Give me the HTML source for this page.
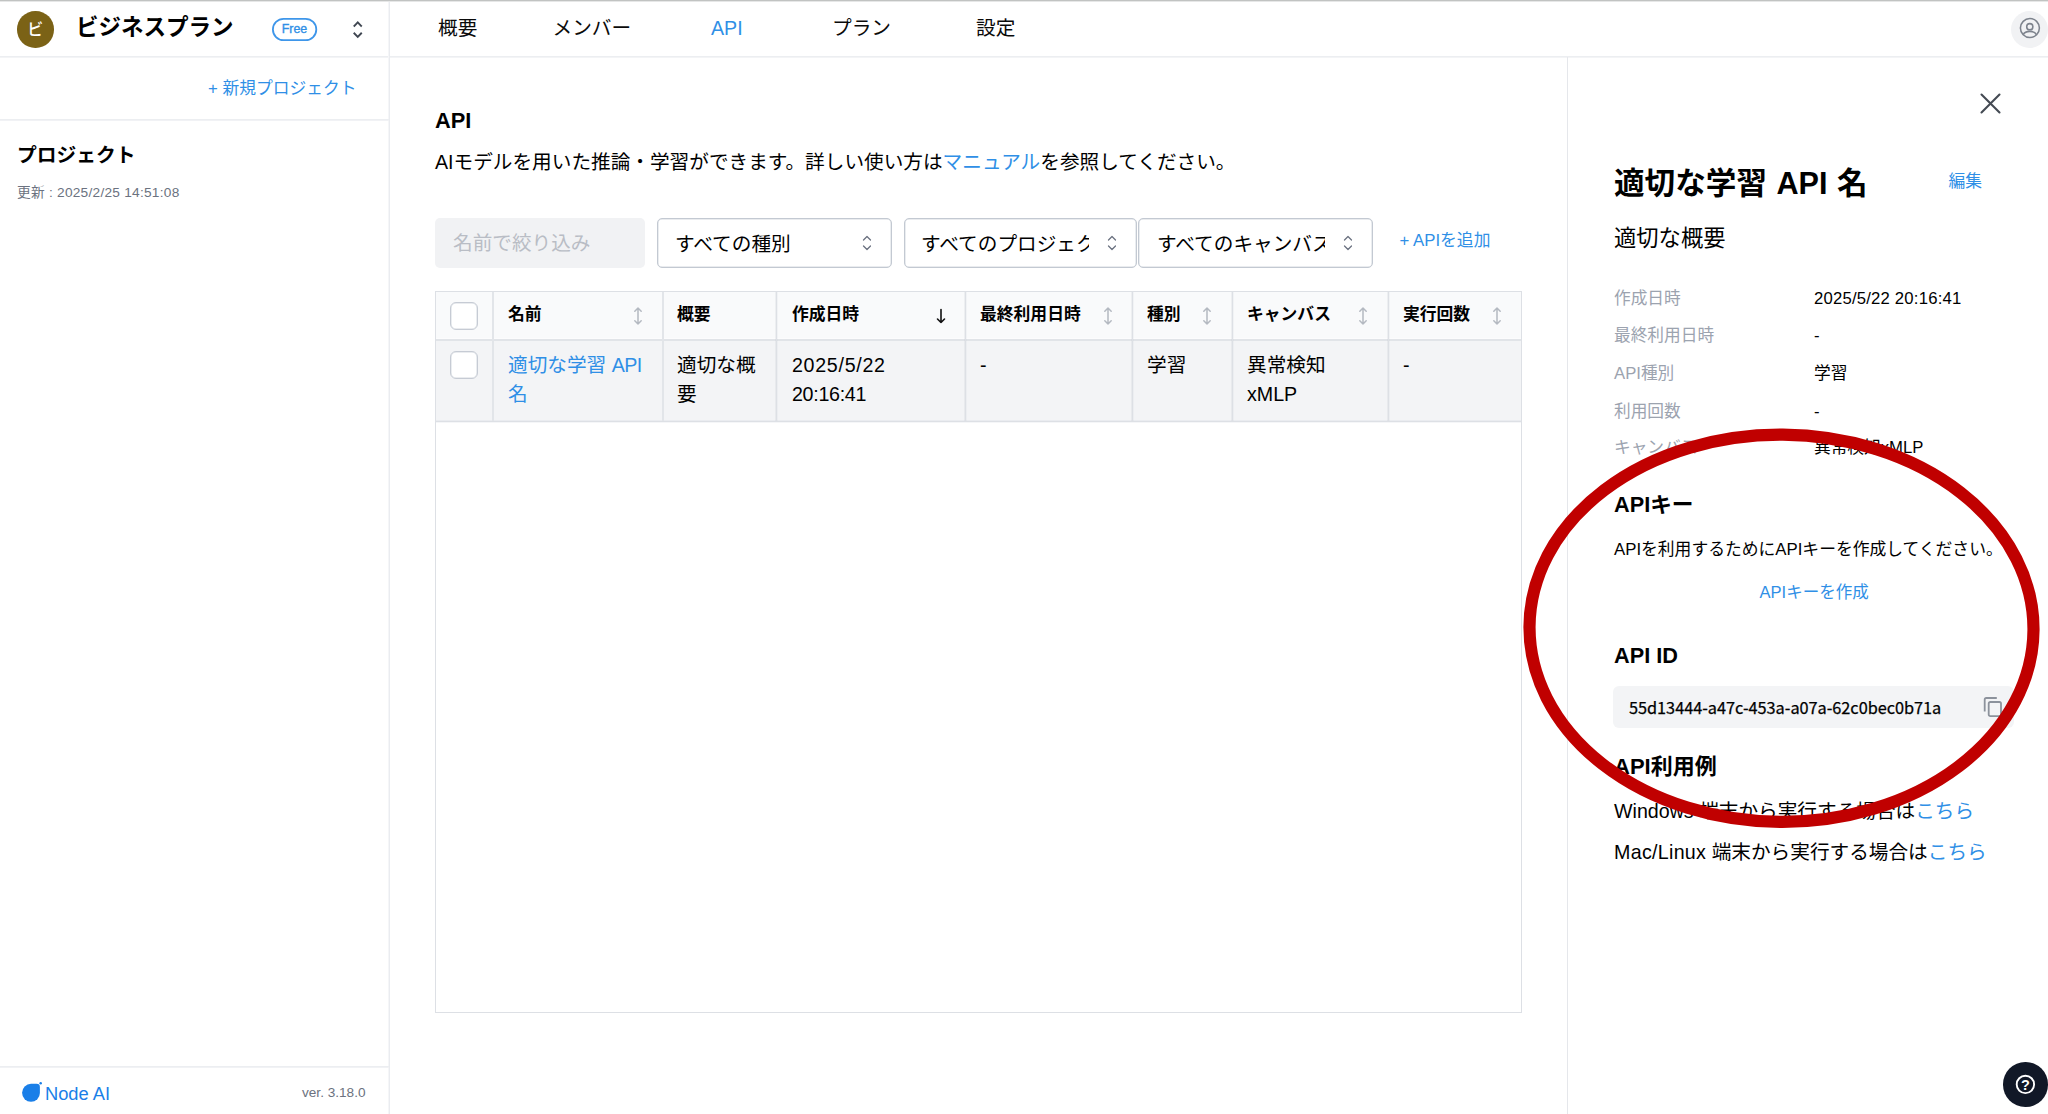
<!DOCTYPE html>
<html lang="ja">
<head>
<meta charset="utf-8">
<title>API</title>
<style>
*{box-sizing:border-box;margin:0;padding:0}
html,body{width:2048px;height:1114px;overflow:hidden;background:#fff}
body{position:relative;font-family:"Liberation Sans","Noto Sans CJK JP",sans-serif;color:#000;font-size:19.65px;line-height:1}
.abs{position:absolute;white-space:nowrap}
.blue{color:#2f8fe6}
.b{font-weight:700}
.line{position:absolute;background:#e5e7eb}
/* top */
#topline{left:0;top:0;width:2048px;height:2px;background:linear-gradient(#c1c3c2 0,#c1c3c2 50%,#e6e7e7 50%,#e6e7e7 100%)}
#hdrline{left:0;top:56px;width:2048px;height:2px;background:linear-gradient(#eceef1 0,#eceef1 50%,#f3f4f6 50%,#f3f4f6 100%)}
#sideline{left:388px;top:2px;width:2px;height:1112px;background:linear-gradient(90deg,#f5f6f8 0,#f5f6f8 50%,#eaecf0 50%,#eaecf0 100%)}
#sb1{left:0;top:119px;width:389px;height:2px;background:linear-gradient(#eceef1 0,#eceef1 50%,#f1f2f5 50%,#f1f2f5 100%)}
#sb2{left:0;top:1066px;width:389px;height:2px;background:linear-gradient(#eceef1 0,#eceef1 50%,#f1f2f5 50%,#f1f2f5 100%)}
#avatar{left:17px;top:11px;width:36.5px;height:36.5px;border-radius:50%;background:#7b6216;color:#fff;font-size:16px;font-weight:500;line-height:38px;text-align:center}
#org{left:76px;top:14px;font-size:22.5px;line-height:28px;font-weight:700;color:#000}
#free{left:272px;top:18px;width:45px;height:23px;color:#2f8fe6;font-size:12.4px;line-height:22px;text-align:center;-webkit-text-stroke:.35px #2f8fe6}
.nav{top:15px;font-size:19.65px;line-height:26px;color:#0a0a0a}
.nav.blue{color:#2f8fe6}
/* select */
.sel{position:absolute;top:218px;height:50px;border:1px solid #c3c9d2;box-shadow:inset 0 0 0 .5px #d5dae0;border-radius:5px;background:#fff;overflow:hidden}
.sel span{position:absolute;left:17px;top:0;line-height:51px;font-size:19.65px;white-space:nowrap;color:#000;overflow:hidden}
.sel svg{position:absolute;top:15px}
/* table */
#tbl{left:435px;top:291px;width:1087px;height:722px;border:1px solid #dde0e5;position:absolute}
.th{position:absolute;top:292px;height:48px;background:#f9fafb}
.vl{position:absolute;top:292px;width:1px;height:129px;background:#dde0e5;box-shadow:-1px 0 0 rgba(190,196,205,.2),1px 0 0 rgba(190,196,205,.12)}
.vl2{position:absolute;top:292px;width:2px;height:129px;background:#e2e5e9}
.thx{font-size:16.8px;line-height:24px;font-weight:700;top:302.5px;color:#000}
.td{font-size:19.65px;line-height:29.25px;top:350.5px;color:#000;white-space:normal}
.td.blue{color:#2f8fe6}
.cb{position:absolute;left:450px;width:28px;height:28px;border:1px solid #c6cbd4;box-shadow:inset 0 0 0 .5px #d5dae0;border-radius:6px;background:#fff}
.sort{position:absolute;top:306px}
/* panel */
.lbl{font-size:16.7px;line-height:20px;color:#9ca3af;left:1614px}
.val{font-size:16.7px;line-height:20px;color:#000;left:1814px}
.h2{font-size:21.7px;line-height:26px;font-weight:700;left:1614px;color:#000}
</style>
</head>
<body>
<div class="line" id="hdrline"></div>
<div class="line" id="sideline"></div>
<div class="line" id="sb1"></div>
<div class="line" id="sb2"></div>
<div class="line" id="topline"></div>

<!-- sidebar header -->
<div class="abs" id="avatar">ビ</div>
<div class="abs" id="org">ビジネスプラン</div>
<svg class="abs" style="left:270px;top:16px" width="50" height="27" viewBox="270 16 50 27"><rect x="272.9" y="18.8" width="43.4" height="21.4" rx="10.7" fill="none" stroke="#3e96ea" stroke-width="1.8"/></svg>
<div class="abs" id="free">Free</div>
<svg class="abs" style="left:350px;top:19px" width="16" height="22" viewBox="350 19 16 22"><path d="M354.4 25.8 L357.75 22.4 L361.1 25.8 M354.4 33.4 L357.75 36.8 L361.1 33.4" fill="none" stroke="#3f4651" stroke-width="1.9" stroke-linecap="square" stroke-linejoin="miter"/></svg>

<div id="t1" class="abs blue" style="left:208px;top:78px;font-size:16.75px;line-height:22px">+ 新規プロジェクト</div>
<div id="t2" class="abs b" style="left:17px;top:142px;font-size:19.75px;line-height:26px">プロジェクト</div>
<div id="t3" class="abs" style="left:17px;top:184px;font-size:13.7px;letter-spacing:.25px;line-height:18px;color:#6b7280">更新 : 2025/2/25 14:51:08</div>

<!-- sidebar footer -->
<svg class="abs" style="left:18px;top:1078px" width="28" height="28" viewBox="18 1078 28 28"><path d="M31 1083.8 H36.6 Q39.9 1083.8 39.9 1087 V1092.8 A8.9 9 0 1 1 31 1083.8 Z" fill="#1a7fe8"/><circle cx="40.7" cy="1083.2" r="1.25" fill="#1a7fe8"/></svg>
<div id="t4" class="abs" style="left:45px;top:1082.5px;font-size:18.3px;line-height:22px;color:#1a7fe8">Node AI</div>
<div id="t5" class="abs" style="left:302px;top:1084px;font-size:13.6px;line-height:18px;color:#6b7280">ver. 3.18.0</div>

<!-- nav -->
<div id="t6" class="abs nav" style="left:438px">概要</div>
<div id="t7" class="abs nav" style="left:552.5px">メンバー</div>
<div id="t8" class="abs nav blue" style="left:711px">API</div>
<div id="t9" class="abs nav" style="left:832px">プラン</div>
<div id="t10" class="abs nav" style="left:976px">設定</div>
<div class="abs" style="left:2011.4px;top:11px;width:37px;height:37px;border-radius:50%;background:#f1f2f4"></div>
<svg class="abs" style="left:2015px;top:13px" width="30" height="30" viewBox="2015 13 30 30"><g fill="none" stroke="#7d838d" stroke-width="1.55"><circle cx="2029.9" cy="28.05" r="9.5"/><circle cx="2029.8" cy="26.7" r="3.1"/><path d="M2023.3 34.6 C2025.2 30.3 2034.4 30.3 2036.4 34.6"/></g></svg>

<!-- main -->
<div id="t11" class="abs b" style="left:435px;top:106.5px;font-size:21.8px;line-height:28px">API</div>
<div id="t12" class="abs" style="left:435px;top:148px;font-size:19.65px;line-height:28px">AIモデルを用いた推論・学習ができます。詳しい使い方は<span class="blue">マニュアル</span>を参照してください。</div>

<div class="abs" style="left:435px;top:218px;width:210px;height:50px;border-radius:5px;background:#f1f2f4"></div>
<div id="t13" class="abs" style="left:453px;top:218px;font-size:19.65px;line-height:50px;color:#b9bdc5">名前で絞り込み</div>

<div class="sel" style="left:657px;width:235px"><span>すべての種別</span><svg style="left:202px" width="14" height="18" viewBox="0 0 14 18"><path d="M3.5 6 L7 2.5 L10.5 6 M3.5 12 L7 15.5 L10.5 12" fill="none" stroke="#6b7280" stroke-width="1.3" stroke-linecap="round" stroke-linejoin="round"/></svg></div>
<div class="sel" style="left:904px;width:233px"><span style="left:16px;width:168px">すべてのプロジェクト</span><svg style="left:200px" width="14" height="18" viewBox="0 0 14 18"><path d="M3.5 6 L7 2.5 L10.5 6 M3.5 12 L7 15.5 L10.5 12" fill="none" stroke="#6b7280" stroke-width="1.3" stroke-linecap="round" stroke-linejoin="round"/></svg></div>
<div class="sel" style="left:1138px;width:235px"><span style="left:18px;width:168px">すべてのキャンバス</span><svg style="left:202px" width="14" height="18" viewBox="0 0 14 18"><path d="M3.5 6 L7 2.5 L10.5 6 M3.5 12 L7 15.5 L10.5 12" fill="none" stroke="#6b7280" stroke-width="1.3" stroke-linecap="round" stroke-linejoin="round"/></svg></div>
<div id="t14" class="abs blue" style="left:1399.5px;top:230px;font-size:16.8px;line-height:22px">+ APIを追加</div>

<!-- table -->
<div id="tbl"></div>
<div class="abs" style="left:436px;top:292px;width:1085px;height:48px;background:#f9fafb"></div>
<div class="abs" style="left:436px;top:341px;width:1085px;height:80px;background:#f3f4f6"></div>
<div class="line" style="left:436px;top:338px;width:1085px;height:1px;background:#fcfcfd"></div><div class="line" style="left:436px;top:339px;width:1085px;height:2px;background:#e1e4e8"></div>
<div class="line" style="left:436px;top:421px;width:1085px;height:1px;background:#dde0e5;box-shadow:0 -1px 0 rgba(190,196,205,.15),0 1px 0 rgba(190,196,205,.15)"></div>
<div class="vl2" style="left:492px"></div>
<div class="vl2" style="left:662px"></div>
<div class="vl" style="left:776px"></div>
<div class="vl" style="left:965px"></div>
<div class="vl" style="left:1132px"></div>
<div class="vl" style="left:1232px"></div>
<div class="vl" style="left:1388px"></div>
<div class="cb" style="top:302px"></div>
<div class="cb" style="top:351px"></div>

<div id="t15" class="abs thx" style="left:508px">名前</div>
<div id="t16" class="abs thx" style="left:677px">概要</div>
<div id="t17" class="abs thx" style="left:792px">作成日時</div>
<div id="t18" class="abs thx" style="left:980px">最終利用日時</div>
<div id="t19" class="abs thx" style="left:1147px">種別</div>
<div id="t20" class="abs thx" style="left:1247px">キャンバス</div>
<div id="t21" class="abs thx" style="left:1403px">実行回数</div>

<svg class="sort" style="left:632px" width="12" height="20" viewBox="0 0 12 20"><path d="M6 2 V18 M2.8 5.2 L6 2 L9.2 5.2 M2.8 14.8 L6 18 L9.2 14.8" fill="none" stroke="#b4b9c1" stroke-width="1.5" stroke-linecap="round" stroke-linejoin="round"/></svg>
<svg class="sort" style="left:935px" width="12" height="20" viewBox="0 0 12 20"><path d="M6 3.5 V16.5 M2.5 13 L6 16.5 L9.5 13" fill="none" stroke="#111" stroke-width="1.6" stroke-linecap="round" stroke-linejoin="round"/></svg>
<svg class="sort" style="left:1102px" width="12" height="20" viewBox="0 0 12 20"><path d="M6 2 V18 M2.8 5.2 L6 2 L9.2 5.2 M2.8 14.8 L6 18 L9.2 14.8" fill="none" stroke="#b4b9c1" stroke-width="1.5" stroke-linecap="round" stroke-linejoin="round"/></svg>
<svg class="sort" style="left:1201px" width="12" height="20" viewBox="0 0 12 20"><path d="M6 2 V18 M2.8 5.2 L6 2 L9.2 5.2 M2.8 14.8 L6 18 L9.2 14.8" fill="none" stroke="#b4b9c1" stroke-width="1.5" stroke-linecap="round" stroke-linejoin="round"/></svg>
<svg class="sort" style="left:1357px" width="12" height="20" viewBox="0 0 12 20"><path d="M6 2 V18 M2.8 5.2 L6 2 L9.2 5.2 M2.8 14.8 L6 18 L9.2 14.8" fill="none" stroke="#b4b9c1" stroke-width="1.5" stroke-linecap="round" stroke-linejoin="round"/></svg>
<svg class="sort" style="left:1491px" width="12" height="20" viewBox="0 0 12 20"><path d="M6 2 V18 M2.8 5.2 L6 2 L9.2 5.2 M2.8 14.8 L6 18 L9.2 14.8" fill="none" stroke="#b4b9c1" stroke-width="1.5" stroke-linecap="round" stroke-linejoin="round"/></svg>

<div id="t22" class="abs td blue" style="left:508px;width:150px">適切な学習 <span style="letter-spacing:-.5px">API</span><br>名</div>
<div id="t23" class="abs td" style="left:677px;width:90px">適切な概<br>要</div>
<div id="t24" class="abs td" style="left:792px"><span style="letter-spacing:.7px">2025/5/22</span><br><span style="letter-spacing:-.3px">20:16:41</span></div>
<div id="t25" class="abs td" style="left:980px">-</div>
<div id="t26" class="abs td" style="left:1147px">学習</div>
<div id="t27" class="abs td" style="left:1247px">異常検知<br>xMLP</div>
<div id="t28" class="abs td" style="left:1403px">-</div>

<!-- right panel -->
<div class="line" style="left:1567px;top:57px;width:1px;height:1057px"></div>
<svg class="abs" style="left:1979px;top:92px" width="24" height="24" viewBox="0 0 24 24"><path d="M2.5 2.5 L20.5 20.5 M20.5 2.5 L2.5 20.5" fill="none" stroke="#444a53" stroke-width="2.1" stroke-linecap="round"/></svg>
<div id="t29" class="abs b" style="left:1614px;top:163px;font-size:30.6px;word-spacing:1px;line-height:40px">適切な学習 API 名</div>
<div id="t30" class="abs blue" style="left:1948.5px;top:170.5px;font-size:16.75px;line-height:22px">編集</div>
<div id="t31" class="abs" style="left:1614px;top:224px;font-size:22.3px;line-height:30px">適切な概要</div>

<div id="t32" class="abs lbl" style="top:289px">作成日時</div><div id="t33" class="abs val" style="top:289px;letter-spacing:.2px">2025/5/22 20:16:41</div>
<div id="t34" class="abs lbl" style="top:326px">最終利用日時</div><div id="t35" class="abs val" style="top:326px">-</div>
<div id="t36" class="abs lbl" style="top:364px">API種別</div><div id="t37" class="abs val" style="top:364px">学習</div>
<div id="t38" class="abs lbl" style="top:402px">利用回数</div><div id="t39" class="abs val" style="top:402px">-</div>
<div id="t40" class="abs lbl" style="top:438px">キャンバス</div><div id="t41" class="abs val" style="top:438px">異常検知xMLP</div>

<div id="t42" class="abs h2" style="top:492px">APIキー</div>
<div id="t43" class="abs" style="left:1614px;top:540px;font-size:16.8px;line-height:20px">APIを利用するためにAPIキーを作成してください。</div>
<div id="t44" class="abs blue" style="left:1759.5px;top:583px;font-size:16.55px;line-height:20px">APIキーを作成</div>
<div id="t45" class="abs h2" style="top:643px">API ID</div>
<div class="abs" style="left:1613px;top:686px;width:401px;height:42px;border-radius:6px;background:#f3f4f6"></div>
<div id="t46" class="abs" style="left:1629px;top:695px;font-size:16.3px;-webkit-text-stroke:.25px #000;letter-spacing:-.02px;line-height:24px;font-family:'Noto Sans CJK JP','Liberation Sans',sans-serif;color:#000">55d13444-a47c-453a-a07a-62c0bec0b71a</div>
<svg class="abs" style="left:1981px;top:695px" width="22" height="24" viewBox="0 0 22 24"><path d="M3.7 16.5 V4.6 Q3.7 3 5.3 3 H15.8" fill="none" stroke="#8c929c" stroke-width="1.8"/><rect x="7.7" y="7" width="12.3" height="14.1" rx="1.6" fill="none" stroke="#8c929c" stroke-width="1.8"/></svg>
<div id="t47" class="abs h2" style="top:754px;font-size:22px">API利用例</div>
<div id="t48" class="abs" style="left:1614px;top:796.5px;font-size:19.65px;line-height:28px">Windows 端末から実行する場合は<span class="blue">こちら</span></div>
<div id="t49" class="abs" style="left:1614px;top:837.5px;font-size:19.65px;line-height:28px"><span style="letter-spacing:.3px">Mac/Linux</span> 端末から実行する場合は<span class="blue">こちら</span></div>

<!-- annotation ellipse -->
<svg id="ell" class="abs" style="left:1500px;top:410px" width="548" height="440" viewBox="1500 410 548 440"><ellipse cx="1781.5" cy="628.3" rx="252" ry="193.6" fill="none" stroke="#c00000" stroke-width="12.2" transform="rotate(0.4 1781.5 628.3)"/></svg>

<!-- help -->
<div class="abs" style="left:2003px;top:1062px;width:44.5px;height:44.5px;border-radius:50%;background:#111827"></div>
<svg class="abs" style="left:2010px;top:1069px" width="32" height="32" viewBox="2010 1069 32 32"><circle cx="2025.4" cy="1084.4" r="8.7" fill="none" stroke="#fff" stroke-width="1.9"/><text x="2025.4" y="1089.6" font-family="Liberation Sans, sans-serif" font-size="14.5" font-weight="700" fill="#fff" text-anchor="middle">?</text></svg>
</body>
</html>
